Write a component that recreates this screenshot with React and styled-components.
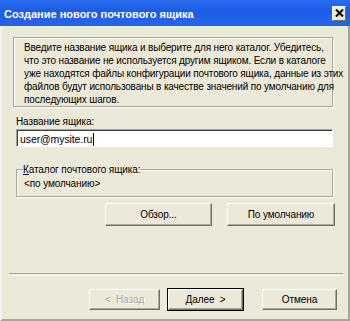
import React from "react";
import styled, { createGlobalStyle } from "styled-components";

const GlobalStyle = createGlobalStyle`
  html, body {
    margin: 0;
    padding: 0;
    background: #ece9d8;
  }
  body {
    font-family: "Liberation Sans", Arial, sans-serif;
    font-size: 10px;
    letter-spacing: -0.1px;
    color: #000;
  }
`;

function App() {
  return (
    <>
      <GlobalStyle />
      <Window>
        {/* title bar */}
        <TitleBar>
          <Title>Создание нового почтового ящика</Title>
          <CloseButton>
            <svg width="9" height="8" viewBox="0 0 9 8">
              <path d="M1 0.5 L8 7.5 M8 0.5 L1 7.5" stroke="#000" strokeWidth="2" />
            </svg>
          </CloseButton>
        </TitleBar>
        {/* body */}
        <Body>
          <InfoBox>
            <span>Введите название ящика и выберите для него каталог. Убедитесь,</span>
            <span>что это название не используется другим ящиком. Если в каталоге</span>
            <span>уже находятся файлы конфигурации почтового ящика, данные из этих</span>
            <span>файлов будут использованы в качестве значений по умолчанию для</span>
            <span>последующих шагов.</span>
          </InfoBox>
          <FieldLabel>Название ящика:</FieldLabel>
          <TextInput>
            user@mysite.ru
            <Caret />
          </TextInput>
          <GroupBox>
            <legend>
              <u>К</u>аталог почтового ящика:
            </legend>
            <GroupValue>&lt;по умолчанию&gt;</GroupValue>
          </GroupBox>
          <ButtonRow>
            <Button $width={107}>Обзор...</Button>
            <Button $width={108}>По умолчанию</Button>
          </ButtonRow>
          <Separator />
          <FooterRow>
            <Button $width={71} $height={21} disabled>
              &lt;&nbsp; Назад
            </Button>
            <Button $width={75} $height={21} $default>
              Далее &nbsp;&gt;
            </Button>
            <Button $width={75} $height={21} $gap={19}>
              Отмена
            </Button>
          </FooterRow>
        </Body>
      </Window>
    </>
  );
}

const Window = styled.div`
  width: 350px;
  height: 321px;
  display: flex;
  flex-direction: column;
  background: #ece9d8;
  overflow: hidden;
`;

//title
const TitleBar = styled.div`
  height: 26px;
  flex: none;
  display: flex;
  align-items: center;
  justify-content: space-between;
  padding: 0 4px 0 4px;
  box-sizing: border-box;
  background: linear-gradient(#2a6ef0, #1c5ce6 40%, #2466e8);
`;

const Title = styled.span`
  color: #fff;
  font-family: "Liberation Sans", Arial, sans-serif;
  font-weight: bold;
  font-size: 11px;
  letter-spacing: 0px;
  margin-top: 1px;
`;

const CloseButton = styled.div`
  width: 14px;
  height: 15px;
  box-sizing: border-box;
  display: flex;
  align-items: center;
  justify-content: center;
  background: #ece9d8;
  border: 1px solid;
  border-color: #fff #716f64 #716f64 #fff;
`;

//body
const Body = styled.div`
  flex: 1;
  display: flex;
  flex-direction: column;
  padding: 11px 16px 0 13px;
  box-sizing: border-box;
  border-left: 2px solid #f6f4ec;
  border-right: 2px solid #a8a597;
  border-bottom: 2px solid #a8a597;
`;

const InfoBox = styled.div`
  width: 320px;
  height: 70px;
  box-sizing: border-box;
  border: 1px solid #a9a69a;
  box-shadow: inset 1px 1px 0 #fff, 1px 1px 0 #fff;
  padding: 3px 0 0 10px;
  margin-left: -2px;
  display: flex;
  flex-direction: column;
  line-height: 13px;
  white-space: nowrap;
  letter-spacing: -0.15px;
`;

const FieldLabel = styled.div`
  margin: 8px 0 0 1px;
  line-height: 13px;
`;

const TextInput = styled.div`
  margin: 1px 0 0 1px;
  width: 317px;
  height: 18px;
  box-sizing: border-box;
  background: #fff;
  border: 1px solid;
  border-color: #a0a0a0 #fff #fff #a0a0a0;
  box-shadow: inset 1px 1px 0 #404040;
  padding: 2px 0 0 3px;
  font-size: 10.5px;
  line-height: 14px;
  display: flex;
  align-items: center;
`;

const Caret = styled.span`
  display: inline-block;
  width: 1px;
  height: 13px;
  background: #000;
  margin-left: 1px;
`;

const GroupBox = styled.fieldset`
  margin: 16px 0 0 1px;
  width: 317px;
  height: 34px;
  box-sizing: border-box;
  padding: 0 0 0 7px;
  border: 1px solid #a9a69a;
  box-shadow: inset 1px 1px 0 #fff, 1px 1px 0 #fff;
  legend {
    padding: 0;
    margin-left: -1px;
    line-height: 13px;
    color: #000;
  }
`;

const GroupValue = styled.div`
  line-height: 13px;
  margin-top: 1px;
`;

const ButtonRow = styled.div`
  display: flex;
  justify-content: flex-end;
  gap: 15px;
  margin: 6px 6px 0 0;
  width: 320px;
`;

const Button = styled.button`
  width: ${(p) => p.$width}px;
  height: ${(p) => p.$height || 23}px;
  margin-left: ${(p) => (p.$gap ? p.$gap - 8 : 0)}px;
  box-sizing: border-box;
  background: #ece9d8;
  font-family: "Liberation Sans", Arial, sans-serif;
  font-size: 10px;
  letter-spacing: -0.1px;
  color: #000;
  padding: 0;
  border: 1px solid;
  border-color: #fff #716f64 #716f64 #fff;
  box-shadow: inset -1px -1px 0 #aca899;
  outline: ${(p) => (p.$default ? "1px solid #000" : "none")};
  outline-offset: 0;
  &:disabled {
    color: #aca899;
    text-shadow: 1px 1px 0 #fff;
  }
`;

const Separator = styled.div`
  margin: 47px -11px 0 -6px;
  height: 1px;
  border-top: 1px solid #aca899;
  border-bottom: 1px solid #fff;
`;

const FooterRow = styled.div`
  display: flex;
  justify-content: flex-end;
  gap: 8px;
  margin: 13px 0 0 0;
  width: 322px;
`;

export default App;
